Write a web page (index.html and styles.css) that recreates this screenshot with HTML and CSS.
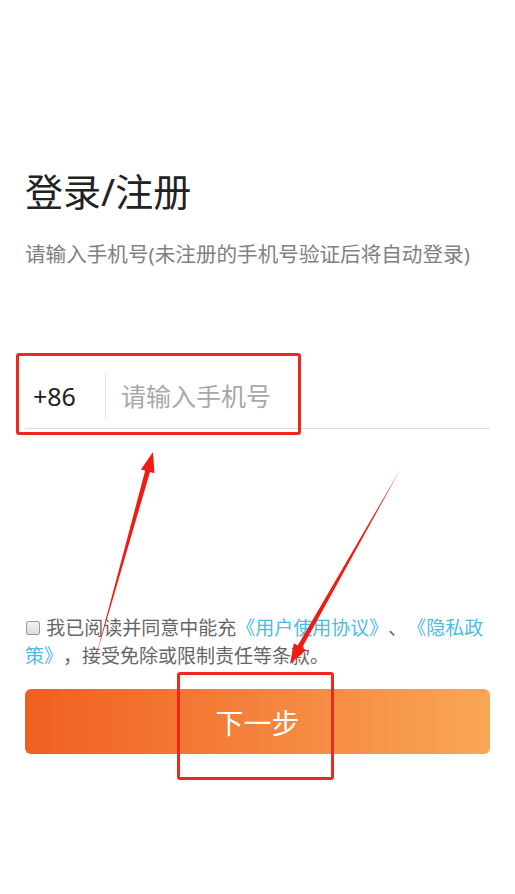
FILE: index.html
```html
<!DOCTYPE html>
<html lang="zh-CN">
<head>
    <meta charset="UTF-8">
    <meta name="viewport" content="width=device-width, initial-scale=1.0">
    <title>登录/注册</title>
    <link rel="stylesheet" href="styles.css">
</head>
<body>

<div class="page">
    <h1 class="title">登录/注册</h1>
    <p class="subtitle">请输入手机号(未注册的手机号验证后将自动登录)</p>

    <div class="phone-row">
        <span class="code">+86</span>
        <span class="divider"></span>
        <input type="text" class="phone" placeholder="请输入手机号">
    </div>

    <div class="agree">
        <input type="checkbox" id="agree">
        <label for="agree">我已阅读并同意中能充<a href="#">《用户使用协议》</a>、<a href="#">《隐私政策》</a>，接受免除或限制责任等条款。</label>
    </div>

    <button class="next">下一步</button>
</div>

<!-- annotation marks -->
<div class="mark mark-input"></div>
<div class="mark mark-button"></div>
<svg class="arrows" width="515" height="894" viewBox="0 0 515 894">
    <polygon points="95,660 145.2,470.6 140.9,469.4 153,452 154.4,473.2 150,472" />
    <polygon points="400,470 302.1,647.8 306,650.1 290,664 293.8,643.2 297.7,645.4" />
</svg>

</body>
</html>
```

FILE: styles.css
```css
body {
    margin: 0;
    background: #fff;
    font-family: "Noto Sans", "Noto Sans CJK SC", sans-serif;
}
.page {
    padding: 163px 25px 0;
}
.title {
    margin: 0;
    font-size: 38px;
    font-weight: normal;
    color: #222;
    line-height: 56px;
}
.subtitle {
    margin: 20px 0 0;
    font-size: 20.6px;
    color: #808080;
    line-height: 30px;
    white-space: nowrap;
}
.phone-row {
    margin-top: 104px;
    height: 46px;
    padding-bottom: 9px;
    display: flex;
    align-items: center;
    border-bottom: 1px solid #dcdcdc;
}
.code {
    width: 80px;
    padding-left: 8px;
    box-sizing: border-box;
    font-size: 25px;
    color: #222;
}
.divider {
    width: 1px;
    height: 46px;
    background: #e6e6e6;
}
.phone {
    flex: 1;
    min-width: 0;
    border: none;
    outline: none;
    padding: 0;
    margin-left: 15px;
    font-family: inherit;
    font-size: 25px;
    color: #222;
}
.phone::placeholder {
    color: #a8a8a8;
}
.agree {
    margin-top: 184px;
    font-family: "Noto Sans CJK SC", sans-serif;
    font-size: 19px;
    line-height: 28px;
    color: #666;
    text-spacing-trim: space-all;
}
.agree input {
    appearance: none;
    -webkit-appearance: none;
    width: 14px;
    height: 14px;
    margin: 0 2px 0 1px;
    vertical-align: 0;
    border: 1px solid #9a9a9a;
    border-radius: 2px;
    background: linear-gradient(#f2f2f2, #dcdcdc);
    box-sizing: border-box;
}
.agree a {
    color: #4bbbe6;
    text-decoration: none;
}
.next {
    display: block;
    width: 100%;
    height: 65px;
    margin-top: 20px;
    border: none;
    border-radius: 6px;
    background: linear-gradient(to right, #f05f22, #f9a656);
    color: #fff;
    font-family: inherit;
    font-size: 28px;
    cursor: pointer;
}
.mark {
    position: absolute;
    border: 3px solid #ea2a1f;
    border-radius: 3px;
    box-sizing: border-box;
}
.mark-input {
    left: 16px;
    top: 353px;
    width: 285px;
    height: 82px;
}
.mark-button {
    left: 177px;
    top: 672px;
    width: 157px;
    height: 108px;
}
.arrows {
    position: absolute;
    left: 0;
    top: 0;
    pointer-events: none;
}
.arrows polygon {
    fill: #f01c14;
}
```
